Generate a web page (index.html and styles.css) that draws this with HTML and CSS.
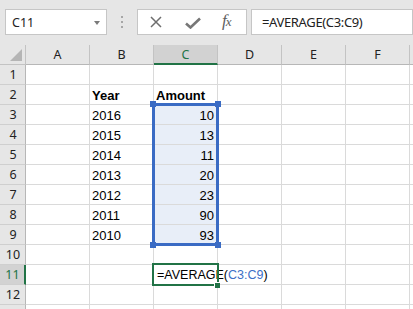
FILE: index.html
```html
<!DOCTYPE html>
<html>
<head>
<meta charset="utf-8">
<link rel="stylesheet" href="styles.css">
</head>
<body>
<div class="toolbar">
  <div class="namebox"><span class="nb-text">C11</span><span class="caret"></span></div>
  <div class="grip"><i></i><i></i><i></i></div>
  <div class="fxbox">
    <svg class="ic-x" width="12" height="12" viewBox="0 0 12 12"><path d="M1 1 L11 11 M11 1 L1 11" stroke="#6e6e6e" stroke-width="1.5" fill="none"/></svg>
    <svg class="ic-check" width="16" height="12" viewBox="0 0 16 12"><path d="M1 6.5 L5.5 10.5 L15 1.5" stroke="#777" stroke-width="2.6" fill="none"/></svg>
    <span class="fx"><i>f</i><span class="fx-x">x</span></span>
  </div>
  <div class="formula">=AVERAGE(C3:C9)</div>
</div>
<div class="sheet">
  <div class="grid">
    <div class="hd corner"></div>
    <div class="hd col">A</div><div class="hd col">B</div><div class="hd col sel">C</div><div class="hd col">D</div><div class="hd col">E</div><div class="hd col">F</div><div class="hd col"></div>

    <div class="hd row">1</div><div class="c"></div><div class="c"></div><div class="c"></div><div class="c"></div><div class="c"></div><div class="c"></div><div class="c"></div>
    <div class="hd row">2</div><div class="c"></div><div class="c b">Year</div><div class="c b">Amount</div><div class="c"></div><div class="c"></div><div class="c"></div><div class="c"></div>
    <div class="hd row">3</div><div class="c"></div><div class="c">2016</div><div class="c n hl">10</div><div class="c"></div><div class="c"></div><div class="c"></div><div class="c"></div>
    <div class="hd row">4</div><div class="c"></div><div class="c">2015</div><div class="c n hl">13</div><div class="c"></div><div class="c"></div><div class="c"></div><div class="c"></div>
    <div class="hd row">5</div><div class="c"></div><div class="c">2014</div><div class="c n hl">11</div><div class="c"></div><div class="c"></div><div class="c"></div><div class="c"></div>
    <div class="hd row">6</div><div class="c"></div><div class="c">2013</div><div class="c n hl">20</div><div class="c"></div><div class="c"></div><div class="c"></div><div class="c"></div>
    <div class="hd row">7</div><div class="c"></div><div class="c">2012</div><div class="c n hl">23</div><div class="c"></div><div class="c"></div><div class="c"></div><div class="c"></div>
    <div class="hd row">8</div><div class="c"></div><div class="c">2011</div><div class="c n hl">90</div><div class="c"></div><div class="c"></div><div class="c"></div><div class="c"></div>
    <div class="hd row">9</div><div class="c"></div><div class="c">2010</div><div class="c n hl">93</div><div class="c"></div><div class="c"></div><div class="c"></div><div class="c"></div>
    <div class="hd row">10</div><div class="c"></div><div class="c"></div><div class="c"></div><div class="c"></div><div class="c"></div><div class="c"></div><div class="c"></div>
    <div class="hd row sel">11</div><div class="c"></div><div class="c"></div><div class="c edit">=AVERAGE(<span class="ref">C3:C9</span>)</div><div class="c"></div><div class="c"></div><div class="c"></div><div class="c"></div>
    <div class="hd row">12</div><div class="c"></div><div class="c"></div><div class="c"></div><div class="c"></div><div class="c"></div><div class="c"></div><div class="c"></div>
    <div class="hd row"></div><div class="c"></div><div class="c"></div><div class="c"></div><div class="c"></div><div class="c"></div><div class="c"></div><div class="c"></div>
  </div>
  <div class="range">
    <i class="h tl"></i><i class="h tr"></i><i class="h bl"></i><i class="h br"></i>
  </div>
  <div class="active"><i class="fill"></i></div>
</div>
</body>
</html>
```

FILE: styles.css
```css
html, body {
  margin: 0;
  padding: 0;
  width: 413px;
  height: 309px;
  overflow: hidden;
  background: #e6e6e6;
}

.toolbar {
  height: 45px;
  box-sizing: border-box;
  padding-top: 9px;
  display: flex;
  align-items: flex-start;
  font-family: "Noto Sans", "Open Sans", sans-serif;
}

.namebox {
  margin-left: 5px;
  width: 102px;
  height: 26px;
  box-sizing: border-box;
  background: #fff;
  border: 1px solid #c6c6c6;
  display: flex;
  align-items: center;
  justify-content: space-between;
  padding: 0 6px 0 6px;
}

.nb-text {
  font-size: 12.5px;
  color: #222;
  padding-top: 1px;
}

.caret {
  width: 0;
  height: 0;
  border-left: 3.5px solid transparent;
  border-right: 3.5px solid transparent;
  border-top: 4px solid #7a7a7a;
  margin-top: 1px;
}

.grip {
  width: 30px;
  height: 26px;
  display: flex;
  flex-direction: column;
  align-items: center;
  justify-content: center;
  gap: 2.7px;
}

.grip i {
  display: block;
  width: 2px;
  height: 2px;
  background: #a6a6a6;
}

.fxbox {
  width: 110px;
  height: 26px;
  box-sizing: border-box;
  background: #fff;
  border: 1px solid #c6c6c6;
  display: flex;
  align-items: center;
  padding-left: 12px;
}

.ic-x { margin-right: 23px; }
.ic-check { margin-right: 21px; margin-top: 1px; }

.fx {
  font-family: "Liberation Serif", serif;
  color: #5e5e5e;
  font-size: 17px;
  letter-spacing: -1px;
  margin-top: -2px;
}

.fx-x {
  font-style: italic;
  font-size: 13px;
}

.formula {
  margin-left: 4px;
  flex: 1;
  height: 26px;
  box-sizing: border-box;
  background: #fff;
  border: 1px solid #c6c6c6;
  font-size: 13px;
  letter-spacing: -0.35px;
  line-height: 24px;
  padding-left: 10px;
  color: #222;
  white-space: nowrap;
}

.sheet {
  position: relative;
  background: #fff;
}

.grid {
  display: grid;
  grid-template-columns: 26px repeat(7, 64px);
  grid-auto-rows: 20px;
}

.grid > div {
  box-sizing: border-box;
  height: 20px;
}

.hd {
  background: #e6e6e6;
  font-family: "Noto Sans", "Open Sans", sans-serif;
  font-size: 12.5px;
  color: #222;
  text-align: center;
  line-height: 19px;
  border-right: 1px solid #c3c3c3;
  border-bottom: 1px solid #c3c3c3;
}

.hd.col {
  border-bottom: 1px solid #b7b7b7;
}

.hd.corner {
  position: relative;
}

.hd.corner::after {
  content: "";
  position: absolute;
  left: 10px;
  top: 4px;
  width: 12px;
  height: 12px;
  background: #b5b5b5;
  clip-path: polygon(100% 0, 100% 100%, 0 100%);
}

.hd.row {
  border-bottom: 1px solid #cfcfcf;
  border-right: 1px solid #b7b7b7;
  padding-left: 1px;
}

.hd.col.sel {
  background: #d2d2d2;
  color: #217346;
  border-bottom: 2px solid #217346;
}

.hd.row.sel {
  background: #d2d2d2;
  color: #217346;
  border-right: 2px solid #217346;
}

.c {
  border-right: 1px solid #dadada;
  border-bottom: 1px solid #dadada;
  font-family: "Liberation Sans", Arial, sans-serif;
  font-size: 13px;
  color: #000;
  line-height: 19px;
  padding: 1px 2px 0 2px;
  white-space: nowrap;
}

.c.b { font-weight: bold; }
.c.n { text-align: right; padding-right: 3px; }
.c.hl { background: #e8eef8; }

.c.edit {
  font-size: 12.5px;
  overflow: visible;
  position: relative;
  z-index: 1;
  padding-left: 3px;
}

.ref { color: #3d6fc6; }

.range {
  position: absolute;
  left: 152px;
  top: 58px;
  width: 67px;
  height: 143px;
  box-sizing: border-box;
  border: 3px solid #3a6bc4;
  z-index: 2;
}

.range .h {
  position: absolute;
  width: 6px;
  height: 6px;
  background: #3a6bc4;
}

.range .tl { left: -5px; top: -5px; }
.range .tr { right: -5px; top: -5px; }
.range .bl { left: -5px; bottom: -5px; }
.range .br { right: -5px; bottom: -5px; }

.active {
  position: absolute;
  left: 152px;
  top: 218px;
  width: 67px;
  height: 23px;
  box-sizing: border-box;
  border: 2px solid #217346;
  z-index: 2;
}

.active .fill {
  position: absolute;
  right: -3px;
  bottom: -4px;
  width: 5px;
  height: 5px;
  background: #217346;
  border: 1px solid #fff;
  border-right: 0;
  border-bottom: 0;
}
```
